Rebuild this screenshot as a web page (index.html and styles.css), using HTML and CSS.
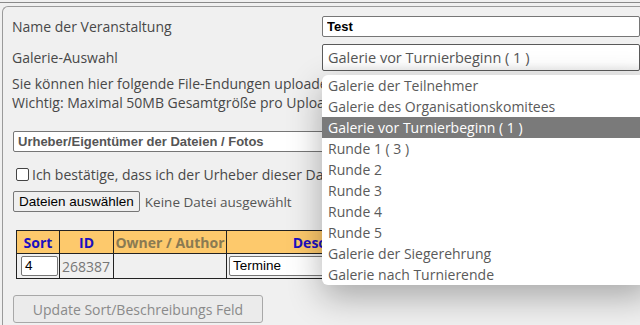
FILE: index.html
```html
<!DOCTYPE html>
<html lang="de">
<head>
<meta charset="UTF-8">
<title>Galerie Upload</title>
<link rel="stylesheet" href="styles.css">
</head>
<body>
    <div class="prev-box"></div>
    <form class="upload-box">
        <div class="row row-name">
            <label class="row-label">Name der Veranstaltung</label>
            <input type="text" class="txt-name" value="Test">
        </div>
        <div class="row row-gallery">
            <label class="row-label">Galerie-Auswahl</label>
            <div class="select-box">Galerie vor Turnierbeginn ( 1 )</div>
        </div>
        <p class="info">Sie können hier folgende File-Endungen uploaden: jpg, jpeg, png, gif, pdf</p>
        <p class="info">Wichtig: Maximal 50MB Gesamtgröße pro Upload!</p>

        <input type="text" class="txt-owner" value="Urheber/Eigentümer der Dateien / Fotos">

        <div class="confirm">
            <span class="checkbox"></span>
            <span>Ich bestätige, dass ich der Urheber dieser Dateien bin</span>
        </div>

        <div class="file-row">
            <span class="file-btn">Dateien auswählen</span>
            <span class="file-none">Keine Datei ausgewählt</span>
        </div>

        <table class="photo-table">
            <tr>
                <th class="col-sort">Sort</th>
                <th class="col-id">ID</th>
                <th class="col-owner">Owner / Author</th>
                <th class="col-desc">Description</th>
            </tr>
            <tr>
                <td><span class="cell-input sort-input">4</span></td>
                <td class="id-cell">268387</td>
                <td></td>
                <td><span class="cell-input desc-input">Termine</span></td>
            </tr>
        </table>

        <button type="button" class="update-btn" disabled>Update Sort/Beschreibungs Feld</button>
    </form>

    <!-- opened select list -->
    <ul class="dropdown">
        <li>Galerie der Teilnehmer</li>
        <li>Galerie des Organisationskomitees</li>
        <li class="selected">Galerie vor Turnierbeginn ( 1 )</li>
        <li>Runde 1 ( 3 )</li>
        <li>Runde 2</li>
        <li>Runde 3</li>
        <li>Runde 4</li>
        <li>Runde 5</li>
        <li>Galerie der Siegerehrung</li>
        <li>Galerie nach Turnierende</li>
    </ul>
</body>
</html>
```

FILE: styles.css
```css
/* Global */
body {
    margin: 0;
    background-color: #f0f0f0;
    font-family: "Open Sans", "Noto Sans", sans-serif;
    font-size: 14px;
    color: #484848;
    overflow: hidden;
    height: 325px;
}

.prev-box {
    height: 2px;
    border-bottom: 1px solid #8a8a8a;
}

.upload-box {
    margin: 3px 0 0 2px;
    padding: 9px 0 0 9px;
    border: 1px solid #9a9a9a;
    border-right: none;
    border-bottom: none;
    border-radius: 6px 0 0 0;
    height: 400px;
    white-space: nowrap;
    overflow: hidden;
}

/* label + field rows */
.row {
    display: flex;
    align-items: center;
}

.row-label {
    width: 310px;
    flex-shrink: 0;
}

.row-name {
    height: 21px;
}

.row-gallery {
    margin-top: 7px;
    height: 27px;
}

.txt-name {
    box-sizing: border-box;
    height: 21px;
    width: 330px;
    margin: 0;
    padding: 0 4px;
    border: 1px solid #767676;
    border-radius: 2px;
    font-family: "Liberation Sans", Arial, sans-serif;
    font-size: 13px;
    font-weight: bold;
    color: #000;
    background: #fff;
}

.select-box {
    box-sizing: border-box;
    height: 27px;
    width: 330px;
    line-height: 25px;
    padding-left: 5px;
    border: 1px solid #5a5a5a;
    border-radius: 2px;
    background: linear-gradient(#fff 70%, #f2f2f2);
    color: #555;
    font-size: 14.5px;
}

.info {
    margin: 0;
    line-height: 19px;
}

.info:first-of-type {
    margin-top: 3px;
}

.txt-owner {
    display: block;
    box-sizing: border-box;
    margin: 19px 0 0 1px;
    width: 620px;
    height: 21px;
    padding: 0 4px;
    border: 1px solid #767676;
    border-radius: 2px;
    background: #fff;
    font-family: "Liberation Sans", Arial, sans-serif;
    font-size: 13px;
    font-weight: bold;
    color: #555;
}

.confirm {
    margin-top: 13px;
    height: 19px;
    display: flex;
    align-items: center;
    gap: 3px;
    padding-left: 4px;
}

.checkbox {
    width: 11px;
    height: 11px;
    border: 1px solid #444;
    border-radius: 2px;
    background: #fff;
}

.file-row {
    margin-top: 7px;
    display: flex;
    align-items: center;
    gap: 5px;
    padding-left: 1px;
}

.file-btn {
    box-sizing: border-box;
    height: 21px;
    padding: 0 5px;
    line-height: 19px;
    border: 1px solid #767676;
    border-radius: 2px;
    background: #efefef;
    font-family: "Liberation Sans", Arial, sans-serif;
    font-size: 13.5px;
    color: #000;
}

.file-none {
    font-size: 13.5px;
    color: #555;
}

/* photo table */
.photo-table {
    margin: 18px 0 0 4px;
    border-collapse: collapse;
}

.photo-table th,
.photo-table td {
    border: 1px solid #222;
    padding: 0;
}

.photo-table th {
    height: 22px;
    background-color: #fdc96c;
    color: #1b0fc0;
    font-size: 14px;
    font-weight: bold;
}

.col-sort { width: 42px; }
.col-id { width: 53px; }
.col-owner { width: 112px; color: #8a7a52 !important; }
.col-desc { width: 212px; }

.photo-table td {
    height: 24px;
}

.cell-input {
    display: block;
    box-sizing: border-box;
    height: 20px;
    line-height: 18px;
    padding-left: 3px;
    border: 1px solid #767676;
    border-radius: 2px;
    background: #fff;
    font-family: "Liberation Sans", Arial, sans-serif;
    font-size: 13.5px;
    color: #000;
}

.sort-input {
    margin: 0 1px 0 4px;
}

.desc-input {
    margin-left: 2px;
    width: 200px;
}

.id-cell {
    color: #777;
    font-size: 14px;
    padding-left: 2px !important;
}

.update-btn {
    display: block;
    margin: 16px 0 0 1px;
    width: 250px;
    height: 28px;
    border: 1px solid #a8a8a8;
    border-radius: 3px;
    background: #ebebeb;
    font-family: "Open Sans", "Noto Sans", sans-serif;
    font-size: 14px;
    color: #8a8a8a;
}

/* the opened list of the gallery select */
.dropdown {
    position: absolute;
    left: 322px;
    top: 75px;
    width: 330px;
    margin: 0;
    padding: 0;
    list-style: none;
    background: #fff;
    border-radius: 6px;
    box-shadow: 0 12px 34px rgba(0, 0, 0, 0.3);
    overflow: hidden;
}

.dropdown li {
    height: 21px;
    line-height: 21px;
    padding-left: 6px;
    font-size: 14px;
    color: #5a5a5a;
}

.dropdown li.selected {
    background-color: #7a7a7a;
    color: #fff;
}
```
